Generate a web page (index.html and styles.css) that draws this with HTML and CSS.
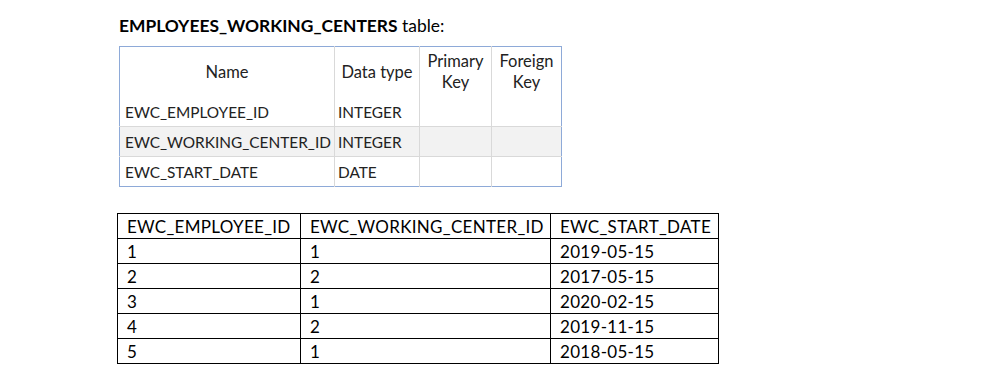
FILE: index.html
```html
<!DOCTYPE html>
<html lang="en">
<head>
<meta charset="utf-8">
<title>EMPLOYEES_WORKING_CENTERS</title>
<link rel="stylesheet" href="styles.css">
</head>
<body>
<div class="page">
  <p class="title"><b>EMPLOYEES_WORKING_CENTERS</b> table:</p>

  <table class="schema">
    <colgroup>
      <col class="c-name"><col class="c-type"><col class="c-pk"><col class="c-fk">
    </colgroup>
    <thead>
      <tr>
        <th>Name</th>
        <th>Data type</th>
        <th>Primary<br>Key</th>
        <th>Foreign<br>Key</th>
      </tr>
    </thead>
    <tbody>
      <tr><td>EWC_EMPLOYEE_ID</td><td>INTEGER</td><td></td><td></td></tr>
      <tr class="alt"><td>EWC_WORKING_CENTER_ID</td><td>INTEGER</td><td></td><td></td></tr>
      <tr><td>EWC_START_DATE</td><td>DATE</td><td></td><td></td></tr>
    </tbody>
  </table>

  <table class="data">
    <colgroup>
      <col class="d-emp"><col class="d-wc"><col class="d-date">
    </colgroup>
    <thead>
      <tr><th>EWC_EMPLOYEE_ID</th><th>EWC_WORKING_CENTER_ID</th><th>EWC_START_DATE</th></tr>
    </thead>
    <tbody>
      <tr><td>1</td><td>1</td><td>2019-05-15</td></tr>
      <tr><td>2</td><td>2</td><td>2017-05-15</td></tr>
      <tr><td>3</td><td>1</td><td>2020-02-15</td></tr>
      <tr><td>4</td><td>2</td><td>2019-11-15</td></tr>
      <tr><td>5</td><td>1</td><td>2018-05-15</td></tr>
    </tbody>
  </table>
</div>
</body>
</html>
```

FILE: styles.css
```css
html, body {
  margin: 0;
  padding: 0;
  background: #ffffff;
}

.page {
  padding: 14px 0 0 117px;
  font-family: Lato, "Liberation Sans", sans-serif;
  color: #000;
}

.title {
  margin: 0 0 0 2px;
  font-size: 17.4px;
  line-height: 24px;
}

.title b {
  font-weight: 700;
}

/* column definition table */
.schema {
  margin: 8px 0 0 2px;
  border-collapse: collapse;
  table-layout: fixed;
  width: 442px;
  border: 1px solid #8eaad8;
  font-size: 15.4px;
  color: #222;
}

.schema .c-name { width: 215px; }
.schema .c-type { width: 85px; }
.schema .c-pk { width: 72px; }
.schema .c-fk { width: 70px; }

.schema th {
  font-weight: 400;
  font-size: 16.5px;
  text-align: center;
  vertical-align: middle;
  height: 50px;
  line-height: 21px;
  padding: 0 1px;
  border-left: 1px solid #d9d9d9;
}

.schema td {
  height: 29px;
  padding: 0 0 0 5px;
  white-space: nowrap;
  border-left: 1px solid #d9d9d9;
  border-top: 1px solid #d9d9d9;
}

.schema tbody tr:first-child td {
  border-top: none;
}

.schema th:first-child,
.schema td:first-child {
  border-left: none;
}

.schema td:nth-child(2) {
  padding-left: 3px;
}

.schema .alt td {
  background: #f2f2f2;
}

/* sample rows table */
.data {
  margin: 26px 0 0 0;
  border-collapse: collapse;
  table-layout: fixed;
  width: 601px;
  font-size: 17px;
  letter-spacing: 0.3px;
  color: #000;
}

.data .d-emp { width: 183px; }
.data .d-wc { width: 250px; }
.data .d-date { width: 168px; }

.data th,
.data td {
  border: 1px solid #000;
  height: 22px;
  padding: 2px 0 0 9px;
  text-align: left;
  font-weight: 400;
  line-height: 22px;
  vertical-align: middle;
}
```
